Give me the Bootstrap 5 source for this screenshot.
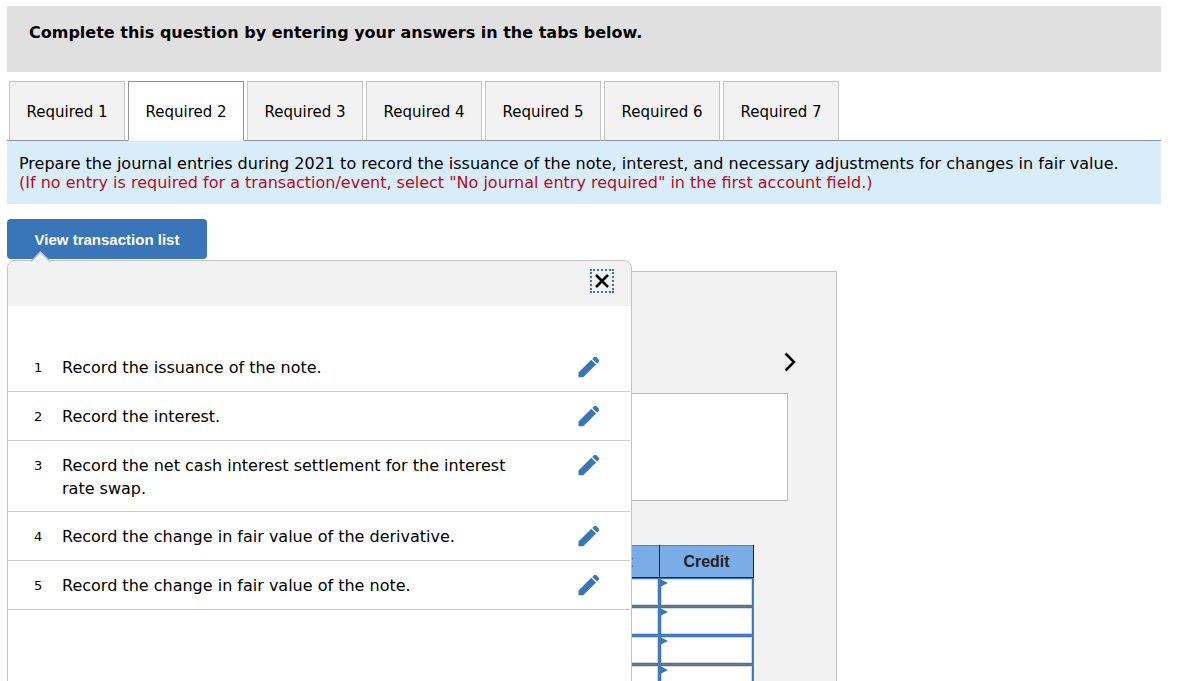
<!DOCTYPE html>
<html lang="en">
<head>
<meta charset="utf-8">
<meta name="viewport" content="width=device-width, initial-scale=1">
<title>Journal entries</title>
<link href="https://cdn.jsdelivr.net/npm/bootstrap@5.3.0/dist/css/bootstrap.min.css" rel="stylesheet">
<style>
  body { font-family: "DejaVu Sans", Verdana, sans-serif; font-size: 16px; color: #000; padding: 6px 17px 0 7px; }
  .instruction { background: #e0e0e0; padding: 15px 22px 27px; font-size: 16px; line-height: 24px; }
  .req-tabs { gap: 3px; padding: 0 2px; margin-top: 9px; border-bottom: 1px solid #949494; }
  .req-tabs .nav-link { width: 116px; height: 60px; padding: 2px 0 0; margin-bottom: -1px; border: 1px solid #c4c4c4; border-bottom-color: #949494; border-radius: 0; background: #f2f2f2; color: #000; font-size: 15px; white-space: nowrap; }
  .req-tabs .nav-link.active { border-color: #949494 #949494 #fff; background: #fff; color: #000; }
  .prompt { background: #d9ecfa; padding: 13px 12px 12px; margin-bottom: 15px; line-height: 19px; font-size: 16px; }
  .prompt-note { color: #b30e1b; }
  .btn-list { width: 200px; height: 40px; padding: 0; border: 0; border-radius: 4px; background: #3a75b9; color: #fff; font: bold 15px "Liberation Sans", Arial, sans-serif; }
  .worksheet { max-width: 830px; min-height: 440px; margin-top: 12px; padding: 78px 48px 0; border: 1px solid #c2c2c2; background: #f2f2f2; }
  .btn-next { width: 12px; height: 24px; padding: 0; border: 0; margin-right: -8px; }
  .description { height: 108px; margin: 19px 0 44px; border: 1px solid #b8b8b8; background: #fff; }
  .journal { width: 698px; margin: 0; border-collapse: collapse; table-layout: fixed; }
  .journal th { height: 32px; padding: 0; border: 1px solid #222; border-top-color: #7d7d70; background: #7aade6; color: #222; font: bold 16px "Liberation Sans", Arial, sans-serif; text-align: center; }
  .journal td { position: relative; height: 29px; padding: 0; border: 1px solid #777; background: #fff; }
  .journal input { display: block; width: 100%; height: 28px; padding: 0 8px; border: 1px solid #3a75b9; border-radius: 0; box-shadow: inset 0 0 0 1px #c8dcf2; background: #fff; }
  .journal .flag { position: absolute; top: 1px; left: 0; border-left: 8px solid #3a75b9; border-top: 4px solid transparent; border-bottom: 4px solid transparent; }
  .col-amount { width: 94px; }
  .list-panel { position: absolute; top: 41px; left: 0; width: 625px; max-width: 100%; min-height: 460px; border: 1px solid #c2c2c2; border-radius: 8px; background: #fff; }
  .list-head { height: 45px; padding: 8px 17px 0 0; border-radius: 7px 7px 0 0; background: #f2f2f2; }
  .arrow-tip { position: absolute; top: -10px; left: 22px; }
  .btn-x { width: 24px; height: 24px; padding: 0; border: 2px dotted #3a75b9; border-radius: 0; }
  .entries { padding: 37px 1px 0 0; }
  .entry { padding: 13px 30px 11px 26px; min-height: 49px; border-bottom: 1px solid #ccc; line-height: 23px; }
  .entry-no { width: 28px; font-size: 13px; }
  .entry-text { width: 470px; font-size: 16px; }
  .btn-edit { width: 22px; height: 22px; padding: 0; border: 0; }
</style>
</head>
<body class="vh-100 overflow-hidden d-flex flex-column">
<header class="instruction fw-bold">Complete this question by entering your answers in the tabs below.</header>

<nav class="nav nav-tabs req-tabs flex-nowrap" role="tablist">
  <button class="nav-link" type="button" role="tab">Required 1</button>
  <button class="nav-link active" type="button" role="tab" aria-selected="true">Required 2</button>
  <button class="nav-link" type="button" role="tab">Required 3</button>
  <button class="nav-link" type="button" role="tab">Required 4</button>
  <button class="nav-link" type="button" role="tab">Required 5</button>
  <button class="nav-link" type="button" role="tab">Required 6</button>
  <button class="nav-link" type="button" role="tab">Required 7</button>
</nav>
<section class="prompt">Prepare the journal entries during 2021 to record the issuance of the note, interest, and necessary adjustments for changes in fair value. <span class="prompt-note d-block">(If no entry is required for a transaction/event, select "No journal entry required" in the first account field.)</span></section>

<svg width="0" height="0" class="position-absolute" aria-hidden="true">
  <symbol id="pencil" viewBox="0 0 22 22">
    <path fill="#3a75b9" d="M.5 21.200v-4.700L13.300 3.800l4.700 4.700L5.200 21.200zM14.300 2.900l1.900-1.800q1-.9 2 0l2.600 2.600q.9 1 0 2l-1.800 1.900z"/>
  </symbol>
</svg>

<main class="position-relative flex-grow-1 overflow-hidden">
  <button class="btn-list d-block" type="button">View transaction list</button>

  <section class="worksheet">
    <div class="d-flex justify-content-end">
      <button class="btn btn-next d-flex" type="button" aria-label="Next">
        <svg width="12" height="24" viewBox="0 0 12 24"><path d="M1.500 3.500 10 12l-8.500 8.500" fill="none" stroke="#000" stroke-width="2.500"/></svg>
      </button>
    </div>
    <div class="description"></div>
    <table class="journal">
      <colgroup><col><col class="col-amount"><col class="col-amount"></colgroup>
      <thead><tr><th></th><th>Debit</th><th>Credit</th></tr></thead>
      <tbody>
        <tr><td></td><td><input aria-label="Debit 1"></td><td><input aria-label="Credit 1"><span class="flag"></span></td></tr>
        <tr><td></td><td><input aria-label="Debit 2"></td><td><input aria-label="Credit 2"><span class="flag"></span></td></tr>
        <tr><td></td><td><input aria-label="Debit 3"></td><td><input aria-label="Credit 3"><span class="flag"></span></td></tr>
        <tr><td></td><td><input aria-label="Debit 4"></td><td><input aria-label="Credit 4"><span class="flag"></span></td></tr>
      </tbody>
    </table>
  </section>

  <section class="list-panel" aria-label="Transaction list">
    <svg class="arrow-tip" width="22" height="11" viewBox="0 0 22 11" aria-hidden="true"><path d="M1 10.500 10.500 1 20 10.500V11H1z" fill="#f2f2f2"/><path d="M1 10.500 10.500 1 20 10.500" fill="none" stroke="#bdbdbd" stroke-width="1.500"/></svg>
    <div class="list-head d-flex justify-content-end">
      <button class="btn btn-x d-flex align-items-center justify-content-center" type="button" aria-label="Close">
        <svg width="14" height="14" viewBox="0 0 14 14"><path d="m1 1 12 12M13 1 1 13" stroke="#000" stroke-width="2.500"/></svg>
      </button>
    </div>
    <div class="entries">
      <div class="entry d-flex"><span class="entry-no">1</span><span class="entry-text">Record the issuance of the note.</span><button class="btn btn-edit d-flex ms-auto" type="button" aria-label="Edit 1"><svg width="22" height="22"><use href="#pencil"/></svg></button></div>
      <div class="entry d-flex"><span class="entry-no">2</span><span class="entry-text">Record the interest.</span><button class="btn btn-edit d-flex ms-auto" type="button" aria-label="Edit 2"><svg width="22" height="22"><use href="#pencil"/></svg></button></div>
      <div class="entry d-flex"><span class="entry-no">3</span><span class="entry-text">Record the net cash interest settlement for the interest rate swap.</span><button class="btn btn-edit d-flex ms-auto" type="button" aria-label="Edit 3"><svg width="22" height="22"><use href="#pencil"/></svg></button></div>
      <div class="entry d-flex"><span class="entry-no">4</span><span class="entry-text">Record the change in fair value of the derivative.</span><button class="btn btn-edit d-flex ms-auto" type="button" aria-label="Edit 4"><svg width="22" height="22"><use href="#pencil"/></svg></button></div>
      <div class="entry d-flex"><span class="entry-no">5</span><span class="entry-text">Record the change in fair value of the note.</span><button class="btn btn-edit d-flex ms-auto" type="button" aria-label="Edit 5"><svg width="22" height="22"><use href="#pencil"/></svg></button></div>
    </div>
  </section>
</main>
<script src="https://cdn.jsdelivr.net/npm/bootstrap@5.3.0/dist/js/bootstrap.bundle.min.js"></script>
</body>
</html>
